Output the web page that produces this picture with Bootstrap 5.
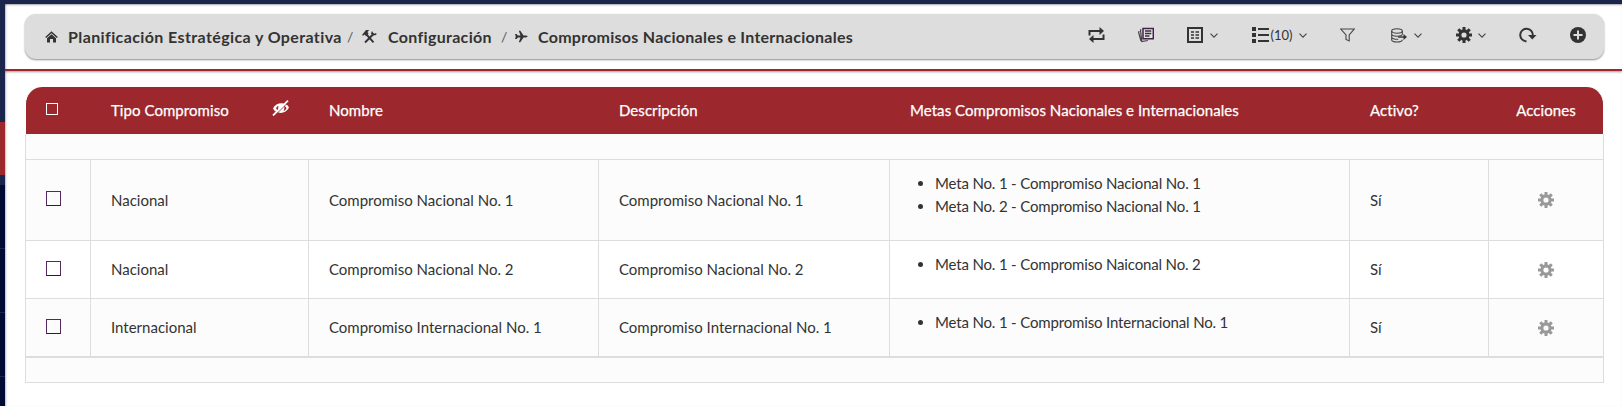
<!DOCTYPE html>
<html lang="es">
<head>
<meta charset="utf-8">
<meta name="viewport" content="width=device-width, initial-scale=1">
<title>Compromisos Nacionales e Internacionales</title>
<link href="https://cdn.jsdelivr.net/npm/bootstrap@5.3.0/dist/css/bootstrap.min.css" rel="stylesheet">
<style>
body{font-family:Lato,"Liberation Sans",sans-serif;font-size:15px;line-height:23px;color:#333;background:#fff;height:406px;overflow:hidden}
.topline{height:4px;background:#1a264c}
.side{width:5px;height:402px;background:#1a264c;z-index:1}
.side .act{height:53px;margin-top:118px;background:#9c272d}
.side .deep{height:221px;margin-top:10px;background:repeating-linear-gradient(#000b35 0 63px,#1a264c 63px 64px)}
.main{box-shadow:inset 0 2px 2px -1px rgba(0,0,0,.35),inset 2px 0 2px -1px rgba(0,0,0,.25)}
.head{height:67px;border-bottom:2px solid #9c272d;padding:10px 18px 10px 19.5px;box-shadow:0 1px 2px rgba(0,0,0,.4)}
.crumbs{height:45px;border-radius:11px;background:#ddd;box-shadow:0 1px 2px rgba(0,0,0,.45);padding:0 18px 0 20.5px}
.crumbs a{font-weight:700;font-size:16px;white-space:nowrap;color:#333;text-decoration:none;margin-left:10px;position:relative;top:-.5px}
.crumbs svg{flex:none}
.crumbs .c-plan{width:279px;letter-spacing:.39px}
.crumbs .c-conf{width:113px;letter-spacing:.32px;margin-left:11px}
.crumbs .c-comp{letter-spacing:.26px}
.sep{width:4px;font-size:14px;color:#555}
.i-tools{margin-left:11px}
.i-plane{margin-left:10px}
.tools{margin-top:-3px;font-size:13px;white-space:nowrap}
.tools .gap-l{margin-left:33px}
.tools .gap-xl{margin-left:34px}
.tools .gap-f{margin-left:36px}
.tools .gap-s{margin-left:6.500px}
.count{width:22px;margin-left:2px}
.grid-t{width:1579px;margin:16px 0 0 20px;table-layout:fixed;border-collapse:separate;border-spacing:0}
.w-check{width:66px}.w-type{width:218px}.w-name{width:290px}.w-desc{width:291px}.w-goal{width:460px}.w-act{width:139px}.w-opt{width:115px}
.grid-t th{height:47px;background:#9c272d;color:#fff;font-weight:400;padding:0 20px;letter-spacing:.06px;-webkit-text-stroke:.25px #fff;white-space:nowrap}
.grid-t th:first-child{border-left:1px solid #fff;border-radius:17px 0 0 0}
.grid-t th:last-child{border-right:1px solid #fff;border-radius:0 17px 0 0}
.grid-t td{border:solid #ddd;border-width:0 1px 1px 0;padding:0 20px;background:#fcfcfc;white-space:nowrap}
.grid-t td:first-child{border-left-width:1px}
.grid-t .even td{background:#fff}
.grid-t .closing td{border-bottom-width:2px}
.r-first{height:26px}.r-tall{height:81px}.r-mid{height:58px}.r-low{height:59px}.r-last{height:25px}
.grid-t ul{margin:0;padding:12px 0 0 25px;letter-spacing:-.16px}
.grid-t svg{display:block}
.box{display:block;width:15px;height:15px;border:1px solid #57285f;border-bottom-color:#1d1d55;margin-bottom:3px}
.box-h{width:12px;height:12px;border-color:#fff}
.grid-t .gear-cell{color:#999}
.gear-cell svg{margin:auto}
.eye{margin:1px -1px 0 0}
</style>
</head>
<body>
<svg class="d-none"><symbol id="gear" viewBox="-8 -8 16 16"><path fill-rule="evenodd" fill="currentColor" d="M-1.500-8h3v2.600l1.300.5L4.700-6.800 6.800-4.700 4.900-2.800 5.400-1.500H8v3H5.400l-.5 1.300L6.800 4.700 4.700 6.800 2.800 4.900l-1.300.5V8h-3V5.400l-1.300-.5L-4.700 6.800-6.800 4.700-4.900 2.800-5.400 1.500H-8v-3h2.600l.5-1.300L-6.800-4.700-4.700-6.800-2.800-4.900-1.500-5.400zM0-2.600a2.600 2.600 0 1 0 0 5.200a2.600 2.600 0 1 0 0-5.200z"/></symbol>
<symbol id="chev" viewBox="0 0 8 5"><path d="M.5.7 4 4.200 7.500.7" fill="none" stroke="#444" stroke-width="1.100"/></symbol></svg>
<div class="topline"></div>
<div class="d-flex">
<aside class="side flex-shrink-0"><div class="act"></div><div class="deep"></div></aside>
<main class="main flex-grow-1">
<header class="head">
<nav class="crumbs d-flex align-items-center">
<svg width="13" height="12" viewBox="0 0 13 12"><path d="M.7 6.500 6.500 1.200l5.800 5.300" fill="none" stroke="#333" stroke-width="1.500"/><path d="M2 7.200 6.500 3.200 11 7.200V11.500H8V8H5v3.500H2z" fill="#333"/></svg>
<a href="#" class="c-plan">Planificación Estratégica y Operativa</a>
<span class="sep">/</span>
<svg class="i-tools" width="15" height="14" viewBox="0 0 15 14"><path d="M4.500 4.500 11.500 12.300M3 12.500 11 4.500" stroke="#333" stroke-width="1.900"/><path d="M0 5 4 0 7.200 0 5.500 2 6.500 3.400 4 6 2.500 4.500 1.200 5.800zM10 1 9 3.500l1.500 2 3.800-.5V3l-2 .8-1.200-1z" fill="#333"/></svg>
<a href="#" class="c-conf">Configuración</a>
<span class="sep">/</span>
<svg class="i-plane" width="13" height="13" viewBox="0 0 13 13"><path d="M0 4h1.500L3 5.600h2.500L3.800.8h1.500L8.500 5.600h2.300q1.800.2 1.800.9t-1.800.9H8.500L5.300 12.200H3.800L5.500 7.400H3L1.500 9H0l.8-2.500z" fill="#333"/></svg>
<a href="#" class="c-comp">Compromisos Nacionales e Internacionales</a>
<div class="tools d-flex align-items-center ms-auto">
<svg width="17" height="16" viewBox="0 0 17 16"><path d="M1.500 8.500V4H12M15.500 7.500V12H5" fill="none" stroke="#333" stroke-width="2"/><path d="M11.500 0 16 4l-4.500 4zM5.500 8 1 12l4.500 4z" fill="#333"/></svg>
<svg class="gap-l" width="16" height="16" viewBox="0 0 16 16"><path d="M5 1.500h10.300v10.300H5z" fill="#e5e5e5" stroke="#43204a" stroke-width="1.500"/><path d="M7 4h6.300M7 6.500h6.300M7 9h4.500" stroke="#333" stroke-width="1.400"/><path d="M3.300 2.500 2.500 3l1.300 11.500 6-1M1.500 4.500l-1 .5L3 14" fill="none" stroke="#444" stroke-width="1.200"/></svg>
<svg class="gap-l" width="16" height="16" viewBox="0 0 16 16"><path d="M1 1h14v14H1z" fill="none" stroke="#333" stroke-width="2"/><path d="M4 5h3M4 8h3M4 11h3M8.500 5H12M8.500 8H12M8.500 11H12" stroke="#333" stroke-width="1.700"/></svg>
<svg class="gap-s" width="8" height="5"><use href="#chev"/></svg>
<svg class="gap-xl" width="17" height="16" viewBox="0 0 17 16"><path d="M0 2h4M0 8h4M0 14h4" stroke="#333" stroke-width="4"/><path d="M6 2h11M6 8h11M6 14h11" stroke="#333" stroke-width="2"/></svg>
<span class="count">(10)</span>
<svg class="gap-s" width="8" height="5"><use href="#chev"/></svg>
<svg class="gap-l" width="15" height="14" viewBox="0 0 15 14"><path d="M.8 1h13.400L9.200 7v6L6 11.500V7z" fill="none" stroke="#444" stroke-width="1.100"/></svg>
<svg class="gap-f" width="16" height="15" viewBox="0 0 16 15" fill="none" stroke="#444" stroke-width="1.100"><ellipse cx="6" cy="3" rx="5.300" ry="2.200"/><path d="M.7 3v8.800c0 3 10.600 3 10.600 0M11.300 3v3M.7 6c0 2.900 10.600 2.900 10.600 0M.7 9c0 2 4 2.500 6.500 2.200"/><path d="M7 9h7" stroke-width="1.600"/><path d="m12.500 6 3.500 3-3.500 3z" fill="#333" stroke="none"/></svg>
<svg class="gap-s" width="8" height="5"><use href="#chev"/></svg>
<svg class="gap-xl" width="16" height="16"><use href="#gear"/></svg>
<svg class="gap-s" width="8" height="5"><use href="#chev"/></svg>
<svg class="gap-l" width="18" height="16" viewBox="0 0 18 16"><path d="M7.500 14.300A6.300 6.300 0 1 1 13.800 8.500" fill="none" stroke="#333" stroke-width="2"/><path d="M9 8h8.500l-4.200 4.500z" fill="#333"/></svg>
<svg class="gap-l" width="16" height="16" viewBox="0 0 16 16"><circle cx="8" cy="8" r="8" fill="#333"/><path d="M3.500 8h9M8 3.500v9" stroke="#ddd" stroke-width="2"/></svg>
</div>
</nav>
</header>
<table class="grid-t">
<colgroup><col class="w-check"><col class="w-type"><col class="w-name"><col class="w-desc"><col class="w-goal"><col class="w-act"><col class="w-opt"></colgroup>
<thead><tr>
<th><span class="box box-h"></span></th>
<th><div class="d-flex justify-content-between">Tipo Compromiso<svg class="eye" width="18" height="16" viewBox="0 0 18 16"><path d="M1 8.500C4 1.800 14 1.800 17 7.500 14 14.500 4 14.500 1 8.500z" fill="#fff"/><path d="M4 8.300C4.500 7 5.500 6 6.500 5.700 6 7.500 6 9.500 7 11 5.500 10.600 4.500 9.500 4 8.300zM14.500 8C14 9.500 13 10.500 11.500 11 12.500 9 12.500 7.500 12 5.800 13 6.200 14 7 14.500 8z" fill="#9c272d"/><path d="M2.500 15.800 17.500 1" stroke="#9c272d"/><path d="M1 15.500 16 .7" stroke="#fff" stroke-width="1.800"/></svg></div></th>
<th>Nombre</th><th>Descripción</th><th>Metas Compromisos Nacionales e Internacionales</th><th>Activo?</th><th class="text-center">Acciones</th>
</tr></thead>
<tbody>
<tr class="r-first"><td colspan="7"></td></tr>
<tr class="r-tall"><td><span class="box"></span></td><td>Nacional</td><td>Compromiso Nacional No. 1</td><td>Compromiso Nacional No. 1</td><td class="align-top"><ul><li>Meta No. 1 - Compromiso Nacional No. 1</li><li>Meta No. 2 - Compromiso Nacional No. 1</li></ul></td><td>Sí</td><td class="gear-cell"><svg width="16" height="16"><use href="#gear"/></svg></td></tr>
<tr class="even r-mid"><td><span class="box"></span></td><td>Nacional</td><td>Compromiso Nacional No. 2</td><td>Compromiso Nacional No. 2</td><td class="align-top"><ul><li>Meta No. 1 - Compromiso Naiconal No. 2</li></ul></td><td>Sí</td><td class="gear-cell"><svg width="16" height="16"><use href="#gear"/></svg></td></tr>
<tr class="closing r-low"><td><span class="box"></span></td><td>Internacional</td><td>Compromiso Internacional No. 1</td><td>Compromiso Internacional No. 1</td><td class="align-top"><ul><li>Meta No. 1 - Compromiso Internacional No. 1</li></ul></td><td>Sí</td><td class="gear-cell"><svg width="16" height="16"><use href="#gear"/></svg></td></tr>
<tr class="r-last"><td colspan="7"></td></tr>
</tbody>
</table>
</main>
</div>
<script src="https://cdn.jsdelivr.net/npm/bootstrap@5.3.0/dist/js/bootstrap.bundle.min.js"></script>
</body>
</html>
